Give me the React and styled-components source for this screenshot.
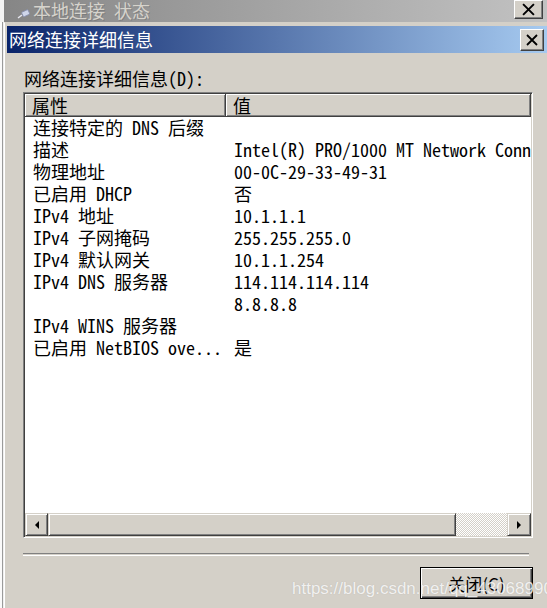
import React from 'react';
import styled, { createGlobalStyle } from 'styled-components';

const GlobalStyle = createGlobalStyle`
    html, body {
        margin: 0;
        padding: 0;
        background: #d4d0c8;
        overflow: hidden;
    }
`;

const FACE = '#d4d0c8';
const CJK = `"Noto Sans Mono CJK SC", "Noto Sans CJK SC", "Liberation Mono", monospace`;

const Screen = styled.div`
    position: relative;
    width: 547px;
    height: 608px;
    display: flex;
    flex-direction: column;
    overflow: hidden;
    background: ${FACE};
    font-family: ${CJK};
`;

const ParentTitle = styled.div`
    height: 22px;
    flex: none;
    display: flex;
    align-items: flex-start;
    padding-left: 13px;
    box-sizing: border-box;
    background: linear-gradient(to right, #868686, #c2c2c2);
    border-left: 4px solid #f4f4f4;
`;

const ParentCaption = styled.span`
    margin-left: 2px;
    font-size: 18px;
    line-height: 20px;
    color: #d6d3cc;
    text-shadow: 1px 1px 0 rgba(90, 90, 90, 0.35);
    white-space: pre;
`;

const Spacer = styled.div`
    flex: 1;
`;

const Main = styled.div`
    flex: 1;
    display: flex;
    min-height: 0;
`;

const ParentEdge = styled.div`
    width: 4px;
    flex: none;
    background: linear-gradient(to right, #fafafa 0 2px, #9a9a9a 2px 3px, #f0f0f0 3px);
`;

const Dialog = styled.div`
    flex: 1;
    display: flex;
    flex-direction: column;
    padding: 3px 0 0 2px;
    border-top: 1px solid ${FACE};
    border-left: 1px solid #ffffff;
    min-width: 0;
`;

const TitleBar = styled.div`
    height: 27px;
    flex: none;
    display: flex;
    align-items: center;
    padding: 0 3px 0 2px;
    background: linear-gradient(to right, #0a246a, #a6caf0);
`;

const TitleText = styled.span`
    font-size: 18px;
    line-height: 20px;
    margin-top: -2px;
    color: #ffffff;
`;

const CloseBox = styled.div`
    width: ${({ $w }) => $w}px;
    height: ${({ $h }) => $h}px;
    flex: none;
    box-sizing: border-box;
    display: flex;
    align-items: center;
    justify-content: center;
    background: ${FACE};
    border: 1px solid;
    border-color: #ffffff #404040 #404040 #ffffff;
    box-shadow: inset -1px -1px 0 #808080;
`;

const Body = styled.div`
    flex: 1;
    display: flex;
    flex-direction: column;
    padding: 15px 14px 0 16px;
    min-height: 0;
`;

const Label = styled.div`
    font-size: 18px;
    line-height: 20px;
    padding-left: 1px;
    color: #000;
`;

const ListView = styled.div`
    margin-top: 4px;
    width: 510px;
    height: 446px;
    box-sizing: border-box;
    display: flex;
    flex-direction: column;
    background: #fff;
    border: 1px solid;
    border-color: #808080 #ffffff #ffffff #808080;
    box-shadow: inset 1px 1px 0 #404040, inset -1px -1px 0 ${FACE};
    padding: 1px;
`;

const Header = styled.div`
    display: grid;
    grid-template-columns: 201px minmax(0, 1fr);
    height: 23px;
    flex: none;
`;

const HeaderCell = styled.div`
    box-sizing: border-box;
    background: ${FACE};
    border-right: 1px solid #404040;
    border-bottom: 1px solid #404040;
    box-shadow: inset 1px 1px 0 #ffffff, inset -1px -1px 0 #808080;
    padding-left: 7px;
    font-size: 18px;
    line-height: 22px;
    color: #000;
`;

const Rows = styled.div`
    flex: 1;
`;

const Row = styled.div`
    display: grid;
    grid-template-columns: 201px minmax(0, 1fr);
    height: 22px;
    font-size: 18px;
    line-height: 21px;
    color: #000;
`;

const Cell = styled.div`
    min-width: 0;
    padding-left: 8px;
    white-space: pre;
    overflow-x: clip;
`;

const ScrollBar = styled.div`
    height: 23px;
    flex: none;
    display: flex;
`;

const ScrollButton = styled.div`
    width: ${({ $w }) => $w}px;
    flex: none;
    box-sizing: border-box;
    display: flex;
    align-items: center;
    justify-content: center;
    background: ${FACE};
    border: 1px solid;
    border-color: ${FACE} #404040 #404040 ${FACE};
    box-shadow: inset 1px 1px 0 #ffffff, inset -1px -1px 0 #808080;
`;

const Arrow = styled.span`
    width: 0;
    height: 0;
    border-top: 4px solid transparent;
    border-bottom: 4px solid transparent;
    ${({ $dir }) => ($dir === 'left' ? 'border-right: 4px solid #000;' : 'border-left: 4px solid #000;')}
`;

const Track = styled.div`
    flex: 1;
    background: repeating-conic-gradient(#ffffff 0 25%, ${FACE} 0 50%) 0 0 / 2px 2px;
`;

const Separator = styled.div`
    margin-top: 15px;
    width: 506px;
    height: 1px;
    border-top: 1px solid #808080;
    border-bottom: 1px solid #ffffff;
`;

const Footer = styled.div`
    display: flex;
    justify-content: flex-end;
    padding-top: 11px;
`;

const Button = styled.div`
    width: 113px;
    height: 32px;
    box-sizing: border-box;
    border: 1px solid #000;
    background: ${FACE};
    box-shadow: inset 1px 1px 0 #ffffff, inset -1px -1px 0 #404040, inset -2px -2px 0 #808080;
    display: flex;
    align-items: center;
    justify-content: center;
    font-family: "Noto Sans CJK SC", "Liberation Sans", sans-serif;
    font-size: 17px;
    color: #000;
`;

const Watermark = styled.div`
    position: absolute;
    left: 292px;
    top: 579px;
    font-family: "Liberation Sans", Arial, sans-serif;
    font-size: 17px;
    color: rgba(255, 255, 255, 0.82);
    text-shadow: 0 0 1px rgba(120, 120, 120, 0.35);
    white-space: nowrap;
`;

const rows = [
    ['连接特定的 DNS 后缀', ''],
    ['描述', 'Intel(R) PRO/1000 MT Network Connection'],
    ['物理地址', '00-0C-29-33-49-31'],
    ['已启用 DHCP', '否'],
    ['IPv4 地址', '10.1.1.1'],
    ['IPv4 子网掩码', '255.255.255.0'],
    ['IPv4 默认网关', '10.1.1.254'],
    ['IPv4 DNS 服务器', '114.114.114.114'],
    ['', '8.8.8.8'],
    ['IPv4 WINS 服务器', ''],
    ['已启用 NetBIOS ove...', '是'],
];

function XGlyph({ size }) {
    return (
        <svg width={size} height={size} viewBox="0 0 12 12">
            <path d="M1 1 L11 11 M11 1 L1 11" stroke="#000" strokeWidth="1.8" />
        </svg>
    );
}

function PlugIcon() {
    return (
        <svg width="14" height="10" viewBox="0 0 14 10" style={{ marginTop: 9 }}>
            <path d="M1 9 L5 6" stroke="#e8e8f0" strokeWidth="1.5" />
            <rect x="5" y="2" width="7" height="5" rx="1" transform="rotate(-25 8 4)" fill="#cfd6ea" stroke="#8890b0" strokeWidth="0.8" />
        </svg>
    );
}

export default function App() {
    return (
        <Screen>
            <GlobalStyle />
            <ParentTitle>
                <PlugIcon />
                <ParentCaption>本地连接 状态</ParentCaption>
                <Spacer />
                <CloseBox $w={29} $h={19}>
                    <XGlyph size={13} />
                </CloseBox>
                <div style={{ width: 4 }} />
            </ParentTitle>
            <Main>
                <ParentEdge />
                <Dialog>
                    <TitleBar>
                        <TitleText>网络连接详细信息</TitleText>
                        <Spacer />
                        <CloseBox $w={24} $h={22}>
                            <XGlyph size={12} />
                        </CloseBox>
                    </TitleBar>
                    <Body>
                        <Label>网络连接详细信息(D):</Label>
                        <ListView>
                            <Header>
                                <HeaderCell>属性</HeaderCell>
                                <HeaderCell>值</HeaderCell>
                            </Header>
                            <Rows>
                                {rows.map(([k, v], i) => (
                                    <Row key={i}>
                                        <Cell>{k}</Cell>
                                        <Cell>{v}</Cell>
                                    </Row>
                                ))}
                            </Rows>
                            <ScrollBar>
                                <ScrollButton $w={23}><Arrow $dir="left" /></ScrollButton>
                                <ScrollButton $w={408} />
                                <Track />
                                <ScrollButton $w={24}><Arrow $dir="right" /></ScrollButton>
                            </ScrollBar>
                        </ListView>
                        <Separator />
                        <Footer>
                            <Button>关闭(C)</Button>
                        </Footer>
                    </Body>
                </Dialog>
            </Main>
            <Watermark>https://blog.csdn.net/qq_43068990</Watermark>
        </Screen>
    );
}
